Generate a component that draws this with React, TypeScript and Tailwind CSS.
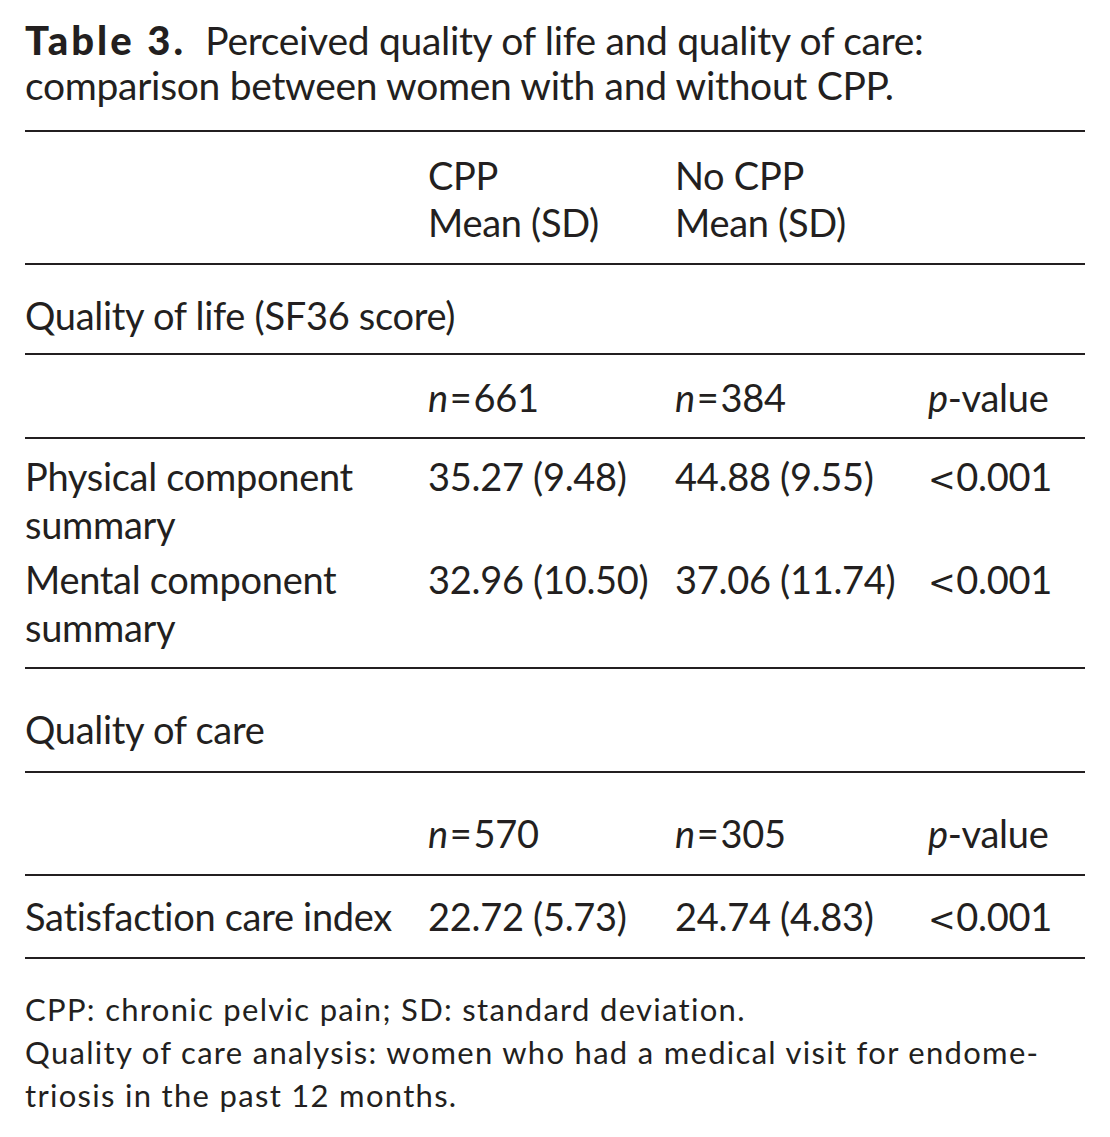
import type { ReactNode } from 'react'

/**
 * Table 3 from the CPP paper: SF36 and satisfaction-of-care scores,
 * women with vs without chronic pelvic pain.
 */

const COLS = 'grid grid-cols-[403px_247px_253px_1fr]'

function Rule() {
  return <div className="h-[2px] bg-[#231f20]" />
}

function N({ value }: { value: number }) {
  return (
    <span>
      <i>n</i>
      <span className="mx-[2px]">=</span>
      {value}
    </span>
  )
}

function PValue() {
  return (
    <span>
      <i>p</i>-value
    </span>
  )
}

// the reference sets "<" as a wide math glyph
function Less({ value }: { value: string }) {
  return (
    <span>
      <span className="mr-[1px] text-[33px]" style={{ fontFamily: '"DejaVu Sans", sans-serif' }}>
        &lt;
      </span>
      {value}
    </span>
  )
}

interface Row {
  label: ReactNode
  cpp: string
  noCpp: string
  p: string
}

const lifeRows: Row[] = [
  { label: <>Physical component<br />summary</>, cpp: '35.27 (9.48)', noCpp: '44.88 (9.55)', p: '0.001' },
  { label: <>Mental component<br />summary</>, cpp: '32.96 (10.50)', noCpp: '37.06 (11.74)', p: '0.001' },
]

function DataRow({ row }: { row: Row }) {
  return (
    <div className={COLS}>
      <div>{row.label}</div>
      <div>{row.cpp}</div>
      <div>{row.noCpp}</div>
      <div><Less value={row.p} /></div>
    </div>
  )
}

function NRow({ a, b, className }: { a: number; b: number; className: string }) {
  return (
    <div className={`${COLS} ${className}`}>
      <div />
      <div><N value={a} /></div>
      <div><N value={b} /></div>
      <div><PValue /></div>
    </div>
  )
}

export default function App() {
  return (
    <div
      className="min-h-[1137px] w-[1110px] bg-white px-[25px] text-[#231f20] text-[38px] leading-[48px] tracking-[-0.3px]"
      style={{ fontFamily: 'Lato, "Liberation Sans", sans-serif' }}
    >
      <div className="pt-[18px] pb-[22px] text-[39px] leading-[45px]">
        <b className="font-black tracking-[3px] text-[40px]">Table 3.</b>&nbsp; Perceived quality of life and quality of care:
        <br />
        comparison between women with and without CPP.
      </div>
      <Rule />

      <div className={`${COLS} pt-[20px] pb-[17px] leading-[47px]`}>
        <div />
        <div>CPP<br />Mean (SD)</div>
        <div>No CPP<br />Mean (SD)</div>
        <div />
      </div>
      <Rule />

      <div className="pt-[26px] pb-[14px]">Quality of life (SF36 score)</div>
      <Rule />
      <NRow a={661} b={384} className="pt-[18px] pb-[16px]" />
      <Rule />
      <div className="flex flex-col gap-[7px] pt-[13px] pb-[16px]">
        {lifeRows.map((r, i) => (
          <DataRow key={i} row={r} />
        ))}
      </div>
      <Rule />

      <div className="pt-[36px] pb-[18px]">Quality of care</div>
      <Rule />
      <NRow a={570} b={305} className="pt-[36px] pb-[17px]" />
      <Rule />
      <div className="pt-[16px] pb-[13px]">
        <DataRow row={{ label: 'Satisfaction care index', cpp: '22.72 (5.73)', noCpp: '24.74 (4.83)', p: '0.001' }} />
      </div>
      <Rule />

      <div className="pt-[29px] text-[31px] leading-[43px] tracking-[1.3px]">
        <p>CPP: chronic pelvic pain; SD: standard deviation.</p>
        <p>
          Quality of care analysis: women who had a medical visit for endome-
          <br />
          triosis in the past 12 months.
        </p>
      </div>
    </div>
  )
}
